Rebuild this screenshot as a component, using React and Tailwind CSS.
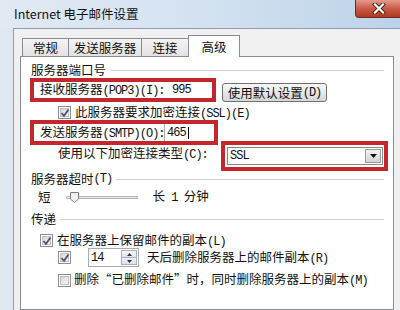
import React from "react";

const ASCII = /^[\x20-\x7e]+$/;
function Mix({ text }) {
  const parts = text.split(/([\x20-\x7e]+)/).filter(Boolean);
  return (
    <>
      {parts.map((p, i) =>
        ASCII.test(p) ? (
          <span
            key={i}
            className="font-['Liberation_Mono',monospace] text-[12px] tracking-[-1px] whitespace-pre"
          >
            {p}
          </span>
        ) : (
          <span key={i}>{p}</span>
        )
      )}
    </>
  );
}

function Group({ text, className }) {
  return (
    <div className={"flex items-center h-[14px] pl-[10px] pr-[9px] whitespace-nowrap " + className}>
      <Mix text={text} />
      <div className="flex-1 ml-[4px] border-t border-[#d3d3d3]" />
    </div>
  );
}

function Check({ checked }) {
  return (
    <div className="relative w-[13px] h-[13px] shrink-0 border border-[#8e8f8f] bg-white">
      <div className="absolute inset-[1px] border border-[#c2c2c2] bg-gradient-to-br from-[#d6d6d6] to-[#f6f6f6]" />
      {checked && (
        <svg className="absolute left-[1px] top-[1px]" width="10" height="10" viewBox="0 0 10 10">
          <path d="M1.5 5 L4 7.8 L8.5 1.5" stroke="#42507a" strokeWidth="1.7" fill="none" />
        </svg>
      )}
    </div>
  );
}

export default function App() {
  return (
    <div className="w-[400px] h-[310px] overflow-hidden flex flex-col bg-[#dfe7f0] font-['Noto_Sans_CJK_SC',sans-serif] text-[#111]">
      {/* title bar */}
      <div className="h-[28px] shrink-0 flex items-start bg-gradient-to-r from-[#e1e9f3] via-[#d4e2f0] to-[#bcd2ea]">
        <div className="pl-[14px] pt-[6px] text-[12.5px] leading-[16px] whitespace-nowrap">Internet 电子邮件设置</div>
        <div className="ml-auto mr-[-3px] w-[48px] h-[18px] rounded-b-[4px] border border-t-0 border-[#6e2b22] bg-gradient-to-b from-[#e39a8c] via-[#c95a46] to-[#b0381f] flex items-center justify-center">
          <svg width="14" height="11" viewBox="0 0 14 11">
            <path d="M3 1.5 L11 9.5 M11 1.5 L3 9.5" stroke="#4a2018" strokeWidth="4" strokeLinecap="square" />
            <path d="M3 1.5 L11 9.5 M11 1.5 L3 9.5" stroke="#ffffff" strokeWidth="2.2" strokeLinecap="square" />
          </svg>
        </div>
      </div>

      <div className="flex-1 flex min-h-0">
        <div className="w-[13px] shrink-0" />
        <div className="flex-1 flex flex-col border-l border-t border-[#8f9db1] bg-[#f0f0f0] pl-[6px] pr-[6px] pt-[6px] text-[12.5px] leading-[14px]">
          {/* tabs */}
          <div className="relative z-10 flex items-end h-[22px] -mb-px ml-[2px]">
            <div className="w-[47px] h-[18px] mb-px border border-b-0 border-[#898c95] bg-gradient-to-b from-[#f4f4f4] to-[#e2e2e2] flex items-center justify-center">常规</div>
            <div className="w-[73px] h-[18px] mb-px border border-b-0 border-l-0 border-[#898c95] bg-gradient-to-b from-[#f4f4f4] to-[#e2e2e2] flex items-center justify-center">发送服务器</div>
            <div className="w-[47px] h-[18px] mb-px border border-b-0 border-l-0 border-[#898c95] bg-gradient-to-b from-[#f4f4f4] to-[#e2e2e2] flex items-center justify-center">连接</div>
            <div className="w-[52px] h-[22px] -ml-px border border-b-0 border-[#898c95] bg-white flex items-start justify-center pt-[4px]">高级</div>
          </div>

          {/* panel */}
          <div className="w-[374px] flex-1 flex flex-col border border-[#898c95] bg-white">
            <Group text="服务器端口号" className="mt-[6px]" />

            {/* POP3 row */}
            <div className="mt-[1px] ml-[9px] flex items-start">
              <div className="w-[186px] h-[24px] border-[4px] border-[#c3262d] bg-white flex items-center pl-[6px]">
                <div className="w-[128px] shrink-0 whitespace-nowrap">
                  <Mix text="接收服务器(POP3)(I):" />
                </div>
                <div className="pl-[4px] font-['Liberation_Mono',monospace] text-[12px] tracking-[-1px]">995</div>
              </div>
              <div className="ml-[6px] mt-[5px] w-[105px] h-[19px] rounded-[3px] border border-[#707070] bg-gradient-to-b from-[#f6f6f6] via-[#e8e8e8] to-[#d6d6d6] flex items-center justify-center whitespace-nowrap">
                <Mix text="使用默认设置(D)" />
              </div>
            </div>

            {/* SSL check */}
            <div className="mt-[3px] h-[15px] ml-[37px] flex items-center">
              <Check checked />
              <div className="ml-[4px] whitespace-nowrap">
                <Mix text="此服务器要求加密连接(SSL)(E)" />
              </div>
            </div>

            {/* SMTP + encryption */}
            <div className="ml-[9px] flex items-start">
              <div className="w-[188px] shrink-0 flex flex-col">
                <div className="h-[25px] border-[4px] border-[#c3262d] bg-white flex items-center pl-[6px]">
                  <div className="w-[124px] shrink-0 whitespace-nowrap">
                    <Mix text="发送服务器(SMTP)(O):" />
                  </div>
                  <div className="h-[17px] flex-1 border-l border-[#abadb3] flex items-center pl-[2px]">
                    <span className="font-['Liberation_Mono',monospace] text-[12px] tracking-[-1px]">465</span>
                    <span className="ml-[2px] w-px h-[12px] bg-black" />
                  </div>
                </div>
                <div className="mt-[1px] h-[14px] pl-[28px] whitespace-nowrap">
                  <Mix text="使用以下加密连接类型(C):" />
                </div>
              </div>
              <div className="ml-[3px] mt-[21px] w-[167px] h-[30px] border-[4px] border-[#c3262d] bg-white flex items-center pl-[2px]">
                <div className="w-[156px] h-[18px] border border-[#8a8a8a] bg-white flex items-center">
                  <span className="pl-[2px] font-['Liberation_Mono',monospace] text-[12px] tracking-[-1px]">SSL</span>
                  <div className="ml-auto mr-px w-[16px] h-[14px] border border-[#9a9a9a] bg-gradient-to-b from-[#f2f2f2] to-[#d4d4d4] flex items-center justify-center">
                    <svg width="7" height="4" viewBox="0 0 7 4">
                      <path d="M0 0 L7 0 L3.5 4 Z" fill="#111" />
                    </svg>
                  </div>
                </div>
              </div>
            </div>

            <Group text="服务器超时(T)" className="mt-[1px]" />

            {/* slider */}
            <div className="mt-[4px] h-[14px] ml-[17px] flex items-center whitespace-nowrap">
              <span>短</span>
              <div className="relative ml-[15px] w-[72px] h-[3px] border border-[#b5b5b5] bg-[#e9ecec] rounded-[1px]">
                <svg className="absolute left-[3px] -top-[5px]" width="9" height="11" viewBox="0 0 9 11">
                  <path d="M0.5 0.5 H8.5 V7 L4.5 10.5 L0.5 7 Z" fill="#eef0f2" stroke="#7d7d7d" />
                </svg>
              </div>
              <span className="ml-[15px]">
                <Mix text="长 1 分钟" />
              </span>
            </div>

            <Group text="传递" className="mt-[8px]" />

            <div className="mt-[8px] h-[13px] ml-[19px] flex items-center leading-[13px]">
              <Check checked />
              <div className="ml-[4px] whitespace-nowrap">
                <Mix text="在服务器上保留邮件的副本(L)" />
              </div>
            </div>

            <div className="mt-px h-[19px] ml-[37px] flex items-center">
              <Check checked />
              <div className="ml-[17px] w-[51px] h-[19px] border border-[#abadb3] bg-white flex items-center">
                <span className="pl-[2px] font-['Liberation_Mono',monospace] text-[12px] tracking-[-1px]">14</span>
                <div className="ml-auto mr-px w-[16px] h-[15px] flex flex-col">
                  <div className="flex-1 border border-[#a7b3c2] bg-gradient-to-b from-[#f5f7fa] to-[#dfe5ec] flex items-center justify-center">
                    <svg width="5" height="3" viewBox="0 0 5 3"><path d="M0 3 L5 3 L2.5 0 Z" fill="#333" /></svg>
                  </div>
                  <div className="flex-1 border border-t-0 border-[#a7b3c2] bg-gradient-to-b from-[#eef1f5] to-[#d9e0e8] flex items-center justify-center">
                    <svg width="5" height="3" viewBox="0 0 5 3"><path d="M0 0 L5 0 L2.5 3 Z" fill="#333" /></svg>
                  </div>
                </div>
              </div>
              <div className="ml-[8px] whitespace-nowrap leading-[13px]">
                <Mix text="天后删除服务器上的邮件副本(R)" />
              </div>
            </div>

            <div className="mt-[6px] h-[14px] ml-[37px] flex items-center">
              <Check />
              <div className="ml-[3px] whitespace-nowrap">
                <Mix text="删除“已删除邮件”时，同时删除服务器上的副本(M)" />
              </div>
            </div>
          </div>
        </div>
      </div>
    </div>
  );
}
